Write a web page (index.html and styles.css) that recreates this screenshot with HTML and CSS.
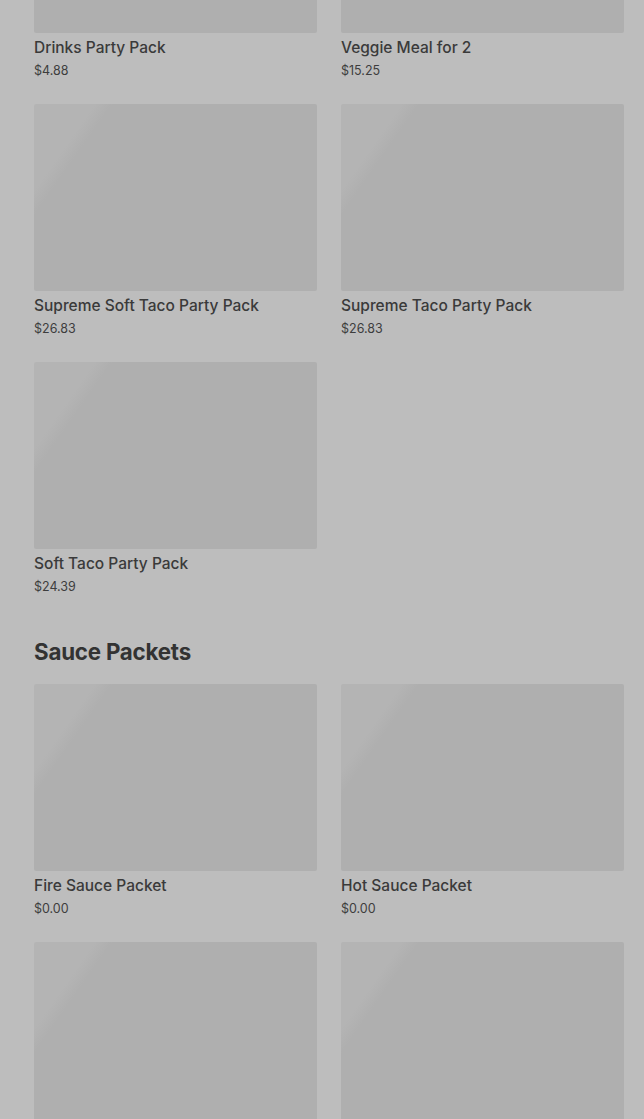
FILE: index.html
```html
<!DOCTYPE html>
<html lang="en">
<head>
<meta charset="utf-8">
<title>Menu</title>
<link rel="stylesheet" href="styles.css">
</head>
<body>
<main class="menu">
  <section class="section section-first">
    <div class="grid">
      <article class="card"><div class="thumb"></div><h3 class="name">Drinks Party Pack</h3><p class="price">$4.88</p></article>
      <article class="card"><div class="thumb"></div><h3 class="name">Veggie Meal for 2</h3><p class="price">$15.25</p></article>
      <article class="card"><div class="thumb"></div><h3 class="name">Supreme Soft Taco Party Pack</h3><p class="price">$26.83</p></article>
      <article class="card"><div class="thumb"></div><h3 class="name">Supreme Taco Party Pack</h3><p class="price">$26.83</p></article>
      <article class="card"><div class="thumb"></div><h3 class="name">Soft Taco Party Pack</h3><p class="price">$24.39</p></article>
    </div>
  </section>
  <section class="section">
    <h2 class="heading">Sauce Packets</h2>
    <div class="grid">
      <article class="card"><div class="thumb"></div><h3 class="name">Fire Sauce Packet</h3><p class="price">$0.00</p></article>
      <article class="card"><div class="thumb"></div><h3 class="name">Hot Sauce Packet</h3><p class="price">$0.00</p></article>
      <article class="card"><div class="thumb"></div></article>
      <article class="card"><div class="thumb"></div></article>
    </div>
  </section>
</main>
</body>
</html>
```
FILE: styles.css
```css
html, body {
  margin: 0;
  padding: 0;
  background: #bdbdbd;
  overflow: hidden;
}
body {
  font-family: Inter, "Noto Sans", "Liberation Sans", sans-serif;
  color: #3b3b3b;
}
.menu {
  padding: 0 20px 0 34px;
}
.section-first {
  margin-top: -154px;
}
.grid {
  display: grid;
  grid-template-columns: 283px 283px;
  column-gap: 24px;
  row-gap: 24px;
}
.card {
  display: flex;
  flex-direction: column;
}
.thumb {
  height: 187px;
  border-radius: 2px;
  background: linear-gradient(125deg, #b4b4b4 0, #b4b4b4 50px, #afafaf 64px, #afafaf 100%);
}
.name {
  margin: 5px 0 0;
  font-size: 15.5px;
  line-height: 20px;
  font-weight: 500;
  color: #3a3a3a;
}
.price {
  margin: 4px 0 0;
  font-size: 12.5px;
  line-height: 18px;
  font-weight: 400;
  color: #3d3d3d;
}
.heading {
  margin: 42px 0 18px;
  font-size: 22.3px;
  line-height: 28px;
  font-weight: 700;
  color: #333333;
  letter-spacing: -0.2px;
}
```
